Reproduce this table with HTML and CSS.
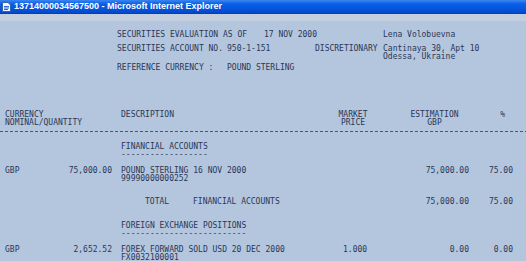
FILE: index.html
```html
<!DOCTYPE html>
<html>
<head>
<meta charset="utf-8">
<link rel="stylesheet" href="styles.css">
</head>
<body>
<div class="titlebar">
  <svg class="app-icon" width="9" height="10" viewBox="0 0 9 10">
    <path d="M0.5 0.5 H6 L8.5 3 V9.5 H0.5 Z" fill="#f4f7ff" stroke="#3a5fa8" stroke-width="1"/>
    <path d="M2 4.5 H7 M2 6 H7 M2 7.5 H6" stroke="#2d6ad8" stroke-width="1"/>
  </svg>
  <span class="title-text">13714000034567500 - Microsoft Internet Explorer</span>
</div>
<div class="strip"></div>
<main class="report">
  <section class="summary">
    <div class="s-row r1">
      <span class="c-label wide">SECURITIES EVALUATION AS OF</span>
      <span class="c-date">17 NOV 2000</span>
      <span class="c-disc"></span>
      <span class="c-client">Lena Volobuevna</span>
    </div>
    <div class="s-row r2">
      <span class="c-label">SECURITIES ACCOUNT NO.</span>
      <span class="c-val">950-1-151</span>
      <span class="c-disc">DISCRETIONARY</span>
      <span class="c-client">Cantinaya 30, Apt 10<br>Odessa, Ukraine</span>
    </div>
    <div class="s-row r3">
      <span class="c-label">REFERENCE CURRENCY :</span>
      <span class="c-val">POUND STERLING</span>
    </div>
  </section>

  <section class="positions">
    <div class="t-row head">
      <span class="t-cur head-cur">CURRENCY<br>NOMINAL/QUANTITY</span>
      <span class="t-desc">DESCRIPTION</span>
      <span class="t-mkt center">MARKET<br>PRICE</span>
      <span class="t-est center">ESTIMATION<br>GBP</span>
      <span class="t-pct pct-head">%</span>
    </div>
    <div class="rule"></div>

    <div class="t-row group g1">
      <span class="t-desc">FINANCIAL ACCOUNTS<br>------------------</span>
    </div>
    <div class="t-row line l1">
      <span class="t-cur">GBP</span>
      <span class="t-qty">75,000.00</span>
      <span class="t-desc">POUND STERLING 16 NOV 2000<br>99990000000252</span>
      <span class="t-mkt"></span>
      <span class="t-est">75,000.00</span>
      <span class="t-pct">75.00</span>
    </div>
    <div class="t-row total">
      <span class="t-desc"><span class="total-word">TOTAL</span>FINANCIAL ACCOUNTS</span>
      <span class="t-mkt"></span>
      <span class="t-est">75,000.00</span>
      <span class="t-pct">75.00</span>
    </div>

    <div class="t-row group g2">
      <span class="t-desc">FOREIGN EXCHANGE POSITIONS<br>--------------------------</span>
    </div>
    <div class="t-row line l2">
      <span class="t-cur">GBP</span>
      <span class="t-qty">2,652.52</span>
      <span class="t-desc">FOREX FORWARD SOLD USD 20 DEC 2000<br>FX0032100001</span>
      <span class="t-mkt price">1.000</span>
      <span class="t-est">0.00</span>
      <span class="t-pct">0.00</span>
    </div>
  </section>
</main>
</body>
</html>
```

FILE: styles.css
```css
html, body {
  margin: 0;
  padding: 0;
}
body {
  width: 526px;
  height: 261px;
  overflow: hidden;
  background: #b3c6de;
  color: #2b3656;
  font-family: "DejaVu Sans Mono", "Liberation Mono", monospace;
  font-size: 8px;
  line-height: 8px;
}
.titlebar {
  height: 13px;
  display: flex;
  align-items: center;
  gap: 3px;
  padding-left: 2px;
  background: linear-gradient(#3b86f2 0%, #0b5fe6 30%, #0654dc 70%, #0346c8 100%);
  border-bottom: 1px solid #0a3ea8;
}
.app-icon {
  flex: none;
}
.title-text {
  color: #ffffff;
  font-family: "Liberation Sans", Arial, sans-serif;
  font-weight: bold;
  font-size: 9px;
  line-height: 13px;
  white-space: nowrap;
}
.strip {
  height: 7px;
  background: #c3cedf;
}
.report {
  display: flex;
  flex-direction: column;
}
.summary {
  display: flex;
  flex-direction: column;
  margin-top: 10px;
  padding-left: 117px;
}
.s-row {
  display: flex;
  white-space: nowrap;
}
.r1 { margin-bottom: 6px; }
.r2 { margin-bottom: 3px; }
.c-label { width: 110px; flex: none; }
.c-label.wide { width: 147px; }
.c-val { width: 88px; flex: none; }
.c-date { width: 51px; flex: none; }
.c-disc { width: 68px; flex: none; }
.c-client { flex: none; }

.positions {
  display: flex;
  flex-direction: column;
  margin-top: 39px;
}
.t-row {
  display: grid;
  grid-template-columns: 40px 67px 214px 60px 83px 44px;
  padding-left: 5px;
  white-space: nowrap;
}
.t-cur { grid-column: 1; }
.head-cur { grid-column: 1 / span 2; }
.t-qty { grid-column: 2; text-align: right; }
.t-desc { grid-column: 3; padding-left: 9px; }
.t-mkt { grid-column: 4; }
.t-est { grid-column: 5; text-align: right; }
.t-pct { grid-column: 6; text-align: right; }
.center { text-align: center; }
.head .t-mkt { padding-right: 6px; }
.head .t-est { padding-left: 14px; text-align: center; }
.pct-head { padding-right: 8px; }
.price { padding-left: 17px; }
.rule {
  height: 1px;
  margin-top: 4px;
  background: repeating-linear-gradient(90deg, #4a5878 0 3px, transparent 3px 5px);
}
.g1 { margin-top: 11px; }
.l1 { margin-top: 8px; }
.total { margin-top: 15px; }
.total-word { display: inline-block; width: 48px; padding-left: 24px; }
.g2 { margin-top: 16px; }
.l2 { margin-top: 8px; }
```
